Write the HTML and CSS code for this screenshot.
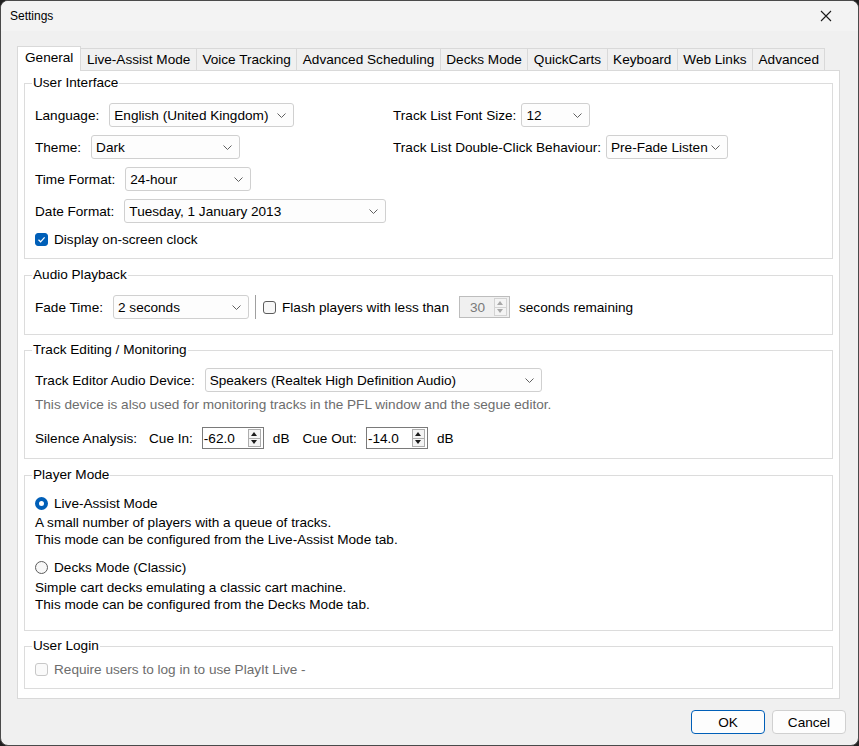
FILE: index.html
```html
<!DOCTYPE html>
<html lang="en">
  <head>
    <meta charset="UTF-8" />
    <meta name="viewport" content="width=device-width, initial-scale=1.0" />
    <link rel="stylesheet" href="styles.css">
    <title>Settings</title>
  </head>
  <body>
    <div class="window">
      <header class="titlebar">
        <span class="title">Settings</span>
        <span class="close">
          <svg width="12" height="12" viewBox="0 0 12 12"><path d="M1 1 L11 11 M11 1 L1 11" stroke="#1a1a1a" stroke-width="1.1" fill="none"/></svg>
        </span>
      </header>

      <div class="client">
        <nav class="tabs">
          <span class="tab active">General</span>
          <span class="tab">Live-Assist Mode</span>
          <span class="tab">Voice Tracking</span>
          <span class="tab">Advanced Scheduling</span>
          <span class="tab">Decks Mode</span>
          <span class="tab">QuickCarts</span>
          <span class="tab">Keyboard</span>
          <span class="tab">Web Links</span>
          <span class="tab">Advanced</span>
        </nav>

        <main class="panel">
          <!-- USER INTERFACE -->
          <section class="group group-ui">
            <div class="group-title">User Interface</div>
            <div class="cols">
              <div class="col col-left">
                <div class="field">
                  <span class="label">Language:</span>
                  <div class="select w-lang">English (United Kingdom)<svg class="chev" width="9" height="5" viewBox="0 0 9 5"><path d="M0.5 0.5 L4.5 4.5 L8.5 0.5" stroke="#606060" fill="none"/></svg></div>
                </div>
                <div class="field">
                  <span class="label">Theme:</span>
                  <div class="select w-theme">Dark<svg class="chev" width="9" height="5" viewBox="0 0 9 5"><path d="M0.5 0.5 L4.5 4.5 L8.5 0.5" stroke="#606060" fill="none"/></svg></div>
                </div>
                <div class="field">
                  <span class="label">Time Format:</span>
                  <div class="select w-time">24-hour<svg class="chev" width="9" height="5" viewBox="0 0 9 5"><path d="M0.5 0.5 L4.5 4.5 L8.5 0.5" stroke="#606060" fill="none"/></svg></div>
                </div>
                <div class="field">
                  <span class="label">Date Format:</span>
                  <div class="select w-date">Tuesday, 1 January 2013<svg class="chev" width="9" height="5" viewBox="0 0 9 5"><path d="M0.5 0.5 L4.5 4.5 L8.5 0.5" stroke="#606060" fill="none"/></svg></div>
                </div>
                <label class="check">
                  <span class="box on"><svg width="11" height="11" viewBox="0 0 11 11"><path d="M2.5 5.8 L4.6 7.8 L8.6 3.4" stroke="#fff" stroke-width="1.2" fill="none"/></svg></span>
                  Display on-screen clock
                </label>
              </div>
              <div class="col col-right">
                <div class="field">
                  <span class="label">Track List Font Size:</span>
                  <div class="select w-size">12<svg class="chev" width="9" height="5" viewBox="0 0 9 5"><path d="M0.5 0.5 L4.5 4.5 L8.5 0.5" stroke="#606060" fill="none"/></svg></div>
                </div>
                <div class="field">
                  <span class="label">Track List Double-Click Behaviour:</span>
                  <div class="select w-click">Pre-Fade Listen<svg class="chev" width="9" height="5" viewBox="0 0 9 5"><path d="M0.5 0.5 L4.5 4.5 L8.5 0.5" stroke="#606060" fill="none"/></svg></div>
                </div>
              </div>
            </div>
          </section>

          <!-- AUDIO PLAYBACK -->
          <section class="group group-audio">
            <div class="group-title">Audio Playback</div>
            <div class="row">
              <span class="label">Fade Time:</span>
              <div class="select w-fade">2 seconds<svg class="chev" width="9" height="5" viewBox="0 0 9 5"><path d="M0.5 0.5 L4.5 4.5 L8.5 0.5" stroke="#606060" fill="none"/></svg></div>
              <span class="sep"></span>
              <label class="check">
                <span class="box"></span>
                Flash players with less than
              </label>
              <div class="spin disabled">
                <span class="spin-value">30</span>
                <span class="spin-btns">
                  <span class="spin-btn"><span class="tri-up"></span></span>
                  <span class="spin-btn"><span class="tri-down"></span></span>
                </span>
              </div>
              <span class="after-spin">seconds remaining</span>
            </div>
          </section>

          <!-- TRACK EDITING -->
          <section class="group group-track">
            <div class="group-title">Track Editing / Monitoring</div>
            <div class="row">
              <span class="label">Track Editor Audio Device:</span>
              <div class="select w-device">Speakers (Realtek High Definition Audio)<svg class="chev" width="9" height="5" viewBox="0 0 9 5"><path d="M0.5 0.5 L4.5 4.5 L8.5 0.5" stroke="#606060" fill="none"/></svg></div>
            </div>
            <p class="hint">This device is also used for monitoring tracks in the PFL window and the segue editor.</p>
            <div class="row row-silence">
              <span class="label">Silence Analysis:</span>
              <span class="cue-label">Cue In:</span>
              <div class="spin">
                <span class="spin-value">-62.0</span>
                <span class="spin-btns">
                  <span class="spin-btn"><span class="tri-up"></span></span>
                  <span class="spin-btn"><span class="tri-down"></span></span>
                </span>
              </div>
              <span class="unit">dB</span>
              <span class="cue-label">Cue Out:</span>
              <div class="spin">
                <span class="spin-value">-14.0</span>
                <span class="spin-btns">
                  <span class="spin-btn"><span class="tri-up"></span></span>
                  <span class="spin-btn"><span class="tri-down"></span></span>
                </span>
              </div>
              <span class="unit">dB</span>
            </div>
          </section>

          <!-- PLAYER MODE -->
          <section class="group group-mode">
            <div class="group-title">Player Mode</div>
            <label class="radio">
              <span class="dot on"></span>
              Live-Assist Mode
            </label>
            <p class="desc">A small number of players with a queue of tracks.<br>This mode can be configured from the Live-Assist Mode tab.</p>
            <label class="radio">
              <span class="dot"></span>
              Decks Mode (Classic)
            </label>
            <p class="desc">Simple cart decks emulating a classic cart machine.<br>This mode can be configured from the Decks Mode tab.</p>
          </section>

          <!-- USER LOGIN -->
          <section class="group group-login">
            <div class="group-title">User Login</div>
            <label class="check disabled">
              <span class="box"></span>
              Require users to log in to use PlayIt Live -
            </label>
          </section>
        </main>

        <footer class="buttons">
          <button class="btn btn-default">OK</button>
          <button class="btn">Cancel</button>
        </footer>
      </div>
    </div>
  </body>
</html>
```

FILE: styles.css
```css
* {
  margin: 0;
  padding: 0;
  box-sizing: border-box;
}

html,
body {
  background-color: #202020;
}

body {
  font-family: "Liberation Sans", Arial, sans-serif;
  font-size: 13.6px;
  color: #000;
}

/* WINDOW */
.window {
  width: 859px;
  height: 746px;
  border: 1px solid #4a4a4a;
  border-radius: 8px;
  background-color: #f0f0f0;
  overflow: hidden;
  display: flex;
  flex-direction: column;
}

.titlebar {
  height: 30px;
  flex: none;
  background-color: #f3f3f3;
  display: flex;
  align-items: center;
  justify-content: space-between;
  padding-left: 9px;
  font-size: 12px;
}

.close {
  display: flex;
  margin-right: 26px;
}

.client {
  flex: 1;
  padding: 15px 12px 0 16px;
  display: flex;
  flex-direction: column;
}

/* TABS */
.tabs {
  display: flex;
  height: 24px;
  margin-right: 6px;
}

.tab {
  margin-top: 2px;
  height: 22px;
  padding: 0 5.5px;
  line-height: 21px;
  border: 1px solid #d9d9d9;
  border-left: none;
  border-bottom: none;
  background-color: #f0f0f0;
  white-space: nowrap;
}

.tab.active {
  position: relative;
  z-index: 1;
  margin-top: 0;
  height: 25px;
  margin-bottom: -1px;
  padding: 0 7px;
  line-height: 22px;
  border-left: 1px solid #d9d9d9;
  background-color: #fff;
}

.panel {
  height: 629px;
  margin-right: 6px;
  background-color: #fff;
  border: 1px solid #d9d9d9;
  padding: 12px 6px 0;
  display: flex;
  flex-direction: column;
  gap: 15px;
}

/* GROUPS */
.group {
  border: 1px solid #dcdcdc;
  padding: 0 10px;
}

.group-title {
  width: fit-content;
  margin: -9px 0 0 -3px;
  padding: 0 1px;
  line-height: 16px;
  background-color: #fff;
}

.group-ui {
  padding-bottom: 11px;
}

.group-audio {
  margin-top: 1px;
  padding-bottom: 15px;
}

.group-track {
  padding-bottom: 9px;
}

.group-mode {
  margin-top: 1px;
  padding-bottom: 17px;
}

.group-login {
  padding-bottom: 11px;
}

.cols {
  display: flex;
  margin-top: 12px;
}

.col {
  display: flex;
  flex-direction: column;
  gap: 8px;
}

.col-left {
  width: 358px;
}

.col-right .field {
  gap: 5px;
}

.field,
.row {
  display: flex;
  align-items: center;
  gap: 10px;
  height: 24px;
  white-space: nowrap;
}

.row {
  margin-top: 12px;
}

.group-track .row {
  margin-top: 10px;
}

/* CONTROLS */
.select {
  height: 24px;
  border: 1px solid #d0d0d0;
  border-radius: 3px;
  background-color: #fdfdfd;
  display: flex;
  align-items: center;
  justify-content: space-between;
  padding: 0 7px 0 4px;
  white-space: nowrap;
}

.w-lang { width: 185px; }
.w-theme { width: 149px; }
.w-time { width: 126px; }
.w-date { width: 262px; }
.w-size { width: 69px; }
.w-click { width: 122px; }
.w-fade { width: 136px; }
.w-device { width: 337px; }

.check {
  display: flex;
  align-items: center;
  gap: 6px;
  height: 16px;
  white-space: nowrap;
}

.box {
  width: 13px;
  height: 13px;
  border: 1px solid #5c5c5c;
  border-radius: 3px;
  background-color: #f7f7f7;
  display: flex;
  align-items: center;
  justify-content: center;
}

.box.on {
  background-color: #005fb8;
  border-color: #005fb8;
}

.check.disabled {
  color: #6d6d6d;
  margin-top: 7px;
}

.check.disabled .box {
  border-color: #c8c8c8;
  background-color: #fafafa;
}

.sep {
  width: 1px;
  height: 24px;
  background-color: #a0a0a0;
  margin: 0 -3px 0 -4px;
}

.spin {
  width: 62px;
  height: 22px;
  border: 1px solid #7a7a7a;
  background-color: #fff;
  display: flex;
  align-items: center;
  padding-left: 1px;
}

.spin-value {
  flex: 1;
}

.spin-btns {
  width: 13px;
  height: 18px;
  margin-right: 2px;
  display: flex;
  flex-direction: column;
}

.spin-btn {
  flex: 1;
  border: 1px solid #adadad;
  background-color: #f4f4f4;
  display: flex;
  align-items: center;
  justify-content: center;
}

.spin-btn + .spin-btn {
  border-top: none;
}

.tri-up,
.tri-down {
  width: 0;
  height: 0;
  border-left: 3px solid transparent;
  border-right: 3px solid transparent;
}

.tri-up {
  border-bottom: 4px solid #1a1a1a;
}

.tri-down {
  border-top: 4px solid #1a1a1a;
}

.spin.disabled {
  width: 51px;
  margin-left: 0;
  border-color: #bdbdbd;
  background-color: #f0f0f0;
  color: #7a7a7a;
}

.spin.disabled .spin-value {
  text-align: center;
}

.spin.disabled .spin-btn {
  border-color: #d3d3d3;
}

.spin.disabled .tri-up {
  border-bottom-color: #a8a8a8;
}

.spin.disabled .tri-down {
  border-top-color: #a8a8a8;
}

.after-spin {
  margin-left: -1px;
}

.hint {
  margin-top: 5px;
  line-height: 16px;
  color: #6d6d6d;
}

.group-track .row-silence {
  height: 22px;
  margin-top: 14px;
  gap: 9px;
}

.row-silence .cue-label {
  margin-left: 3px;
}

.row-silence .unit + .cue-label {
  margin-left: 4px;
}

/* PLAYER MODE */
.radio {
  display: flex;
  align-items: center;
  gap: 6px;
  height: 16px;
  margin-top: 12px;
}

.desc + .radio {
  margin-top: 11px;
}

.dot {
  width: 13px;
  height: 13px;
  border: 1px solid #5c5c5c;
  border-radius: 50%;
  background-color: #f7f7f7;
}

.dot.on {
  border: 4px solid #005fb8;
  background-color: #fff;
}

.desc {
  margin-top: 4px;
  line-height: 16.5px;
}

.radio + .desc + .radio + .desc {
  margin-top: 5px;
}

/* BUTTONS */
.buttons {
  display: flex;
  justify-content: flex-end;
  gap: 7px;
  margin-top: 11px;
}

.btn {
  width: 74px;
  height: 24px;
  border: 1px solid #d0d0d0;
  border-radius: 4px;
  background-color: #fdfdfd;
  font-family: inherit;
  font-size: 13.6px;
  color: #000;
}

.btn-default {
  border-color: #005fb8;
}
```
